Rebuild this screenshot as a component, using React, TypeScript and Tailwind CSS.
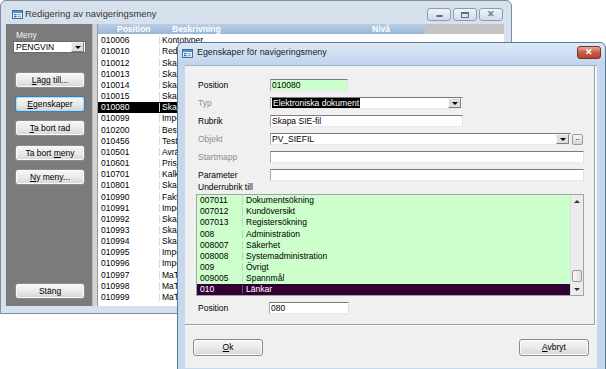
import React from "react";

const backRows = [
  ["010006", "Kontotyper"],
  ["010010", "Redovisningsår"],
  ["010012", "Skapa kundfil"],
  ["010013", "Skapa artikelfil"],
  ["010014", "Skapa prisfil"],
  ["010015", "Skapa orderfil"],
  ["010080", "Skapa SIE-fil"],
  ["010099", "Import av data"],
  ["010200", "Beställning"],
  ["010456", "Test"],
  ["010501", "Avräkning"],
  ["010601", "Prisjustering"],
  ["010701", "Kalkyl"],
  ["010801", "Skapa rapport"],
  ["010990", "Fakturering"],
  ["010991", "Import kunder"],
  ["010992", "Skapa export"],
  ["010993", "Skapa lista"],
  ["010994", "Skapa etikett"],
  ["010995", "Import artiklar"],
  ["010996", "Import priser"],
  ["010997", "MaTs export"],
  ["010998", "MaTs import"],
  ["010999", "MaTs rapport"],
];

const subRows = [
  ["007011", "Dokumentsökning"],
  ["007012", "Kundöversikt"],
  ["007013", "Registersökning"],
  ["008", "Administration"],
  ["008007", "Säkerhet"],
  ["008008", "Systemadministration"],
  ["009", "Övrigt"],
  ["009005", "Spannmål"],
  ["010", "Länkar"],
];

function WinIcon() {
  return (
    <svg width="11" height="9" viewBox="0 0 11 9" className="shrink-0">
      <rect x="0.5" y="0.5" width="10" height="8" fill="#eef4fb" stroke="#3b6ea8" />
      <rect x="1" y="1" width="9" height="2" fill="#5b8bc7" />
      <rect x="2" y="4" width="2.5" height="1.3" fill="#3b6ea8" />
      <rect x="5.5" y="4" width="3.5" height="1.3" fill="#8fb0d4" />
      <rect x="2" y="6" width="2.5" height="1.3" fill="#3b6ea8" />
      <rect x="5.5" y="6" width="3.5" height="1.3" fill="#8fb0d4" />
    </svg>
  );
}

function DropBtn() {
  return (
    <div className="flex h-[10px] w-[13px] shrink-0 items-end justify-center border border-t-[#f4f4f4] border-l-[#f4f4f4] border-r-[#7e7e7e] border-b-[#7e7e7e] bg-[#dedede] pb-[2px]">
      <div className="h-0 w-0 border-l-[3px] border-r-[3px] border-t-[3px] border-l-transparent border-r-transparent border-t-black" />
    </div>
  );
}

function Btn({
  children,
  focused = false,
  className = "",
}: {
  children: React.ReactNode;
  focused?: boolean;
  className?: string;
}) {
  return (
    <div
      className={`flex w-[70px] shrink-0 items-center justify-center rounded-[3px] border bg-gradient-to-b from-[#f7f7f7] via-[#ebebeb] to-[#d5d5d5] text-[8.5px] leading-none text-black ${
        focused
          ? "border-[#3c7fb1] shadow-[inset_0_0_0_1px_#a9dcf6]"
          : "border-[#8c8c8c] shadow-[inset_0_0_0_1px_#fafafa]"
      } ${className}`}
    >
      <span className="whitespace-pre">{children}</span>
    </div>
  );
}

function Field({
  className = "",
  children,
}: {
  className?: string;
  children?: React.ReactNode;
}) {
  return (
    <div
      className={`flex h-[12px] shrink-0 items-center border border-t-[#7c7c7c] border-l-[#a9a9a9] border-r-[#e2e2e2] border-b-[#e8e8e8] pl-[1px] text-[8.5px] leading-none ${className}`}
    >
      {children}
    </div>
  );
}

function Row({
  label,
  dim = false,
  children,
}: {
  label: string;
  dim?: boolean;
  children: React.ReactNode;
}) {
  return (
    <div className="flex h-[12px] items-center">
      <div className={`w-[72px] shrink-0 text-[8.5px] leading-none ${dim ? "text-[#8e8e8e]" : "text-black"}`}>
        {label}
      </div>
      {children}
    </div>
  );
}

export default function App() {
  return (
    <div className="relative h-[369px] w-[606px] overflow-hidden bg-white font-['Liberation_Sans',Arial,sans-serif]">
      {/* back window */}
      <div className="absolute left-0 top-0 flex h-[314px] w-[512px] flex-col rounded-t-[6px] border border-[#7d8da0] bg-[#d6e1ed]">
        <div className="flex h-[23px] shrink-0 items-start pl-[11px] pr-[8px]">
          <div className="mt-[9px] flex items-center">
            <WinIcon />
          </div>
          <span className="ml-[2px] mt-[8px] text-[9.4px] leading-none text-[#333333]">
            Redigering av navigeringsmeny
          </span>
          <div className="ml-auto mt-[7px] flex gap-[2px]">
            <div className="flex h-[13px] w-[24px] items-end justify-center rounded-[3px] border border-[#8b9bb0] bg-gradient-to-b from-[#eef3f9] to-[#d2dde9] pb-[3px]">
              <div className="h-[2px] w-[7px] rounded-[1px] border border-[#5d6d82]" />
            </div>
            <div className="flex h-[13px] w-[24px] items-center justify-center rounded-[3px] border border-[#8b9bb0] bg-gradient-to-b from-[#eef3f9] to-[#d2dde9]">
              <div className="h-[6px] w-[8px] border border-t-2 border-[#5d6d82]" />
            </div>
            <div className="flex h-[13px] w-[24px] items-center justify-center rounded-[3px] border border-[#8b9bb0] bg-gradient-to-b from-[#eef3f9] to-[#d2dde9] text-[9px] font-bold leading-none text-[#6a7a8e]">
              ✕
            </div>
          </div>
        </div>

        <div className="mb-[7px] ml-[5px] mr-[7px] flex min-h-0 flex-1">
          {/* left panel */}
          <div className="flex w-[86px] shrink-0 flex-col bg-[#7b7b7b] pb-[7px] pt-[6px]">
            <div className="ml-[10px] h-[10px] text-[8.5px] leading-[10px] text-[#f2f2f2]">Meny</div>
            <div className="ml-[7px] mt-[1px] flex h-[12px] w-[73px] items-center justify-between border border-[#6a6a6a] bg-white pl-[2px] pr-[1px] text-[8.5px] leading-none">
              <span>PENGVIN</span>
              <DropBtn />
            </div>
            <div className="ml-[9px] mt-[19px] flex flex-col gap-[8px]">
              <Btn className="h-[16px]">
                <span className="underline">L</span>ägg till...
              </Btn>
              <Btn focused className="h-[16px]">
                <span className="underline">E</span>genskaper
              </Btn>
              <Btn className="h-[16px]">
                <span className="underline">T</span>a bort rad
              </Btn>
              <Btn className="mt-[1px] h-[16px]">
                Ta bort <span className="underline">m</span>eny
              </Btn>
              <Btn className="h-[16px]">
                <span className="underline">N</span>y meny...
              </Btn>
            </div>
            <Btn className="ml-[9px] mt-auto h-[16px]">
              Stän<span className="underline">g</span>
            </Btn>
          </div>
          <div className="w-[6px] shrink-0 border-l border-r border-l-[#b9b9b9] border-r-[#9a9a9a] bg-[#d2d2d2]" />

          {/* list */}
          <div className="flex min-w-0 flex-1 flex-col overflow-hidden bg-white">
            <div className="flex h-[10px] shrink-0 text-[8.5px] font-bold leading-[10px] text-white">
              <div className="flex w-[74px] bg-gradient-to-b from-[#b8cee6] to-[#9ab7d8] pl-[19px]">Position</div>
              <div className="w-[200px] bg-gradient-to-b from-[#b8cee6] to-[#9ab7d8]">Beskrivning</div>
              <div className="w-[53px] bg-gradient-to-b from-[#b8cee6] to-[#9ab7d8]">Nivå</div>
              <div className="flex-1 bg-[#c3c3c3]" />
            </div>
            <div className="flex flex-col pt-[1px]">
              {backRows.map(([code, desc], i) => {
                const sel = code === "010080";
                return (
                  <div
                    key={code}
                    className={`flex h-[11.16px] items-center text-[8.5px] leading-none ${sel ? "bg-black text-white" : "text-black"}`}
                  >
                    <div className="w-[62px] shrink-0 border-r border-[#dcdcdc] pl-[3px]">{code}</div>
                    <div
                      className={`overflow-hidden whitespace-nowrap pl-[2px] ${i === 0 ? "w-[60px]" : "w-[17px]"}`}
                    >
                      {desc}
                    </div>
                  </div>
                );
              })}
            </div>
          </div>
        </div>
      </div>

      {/* dialog */}
      <div className="absolute left-[177px] top-[42px] flex h-[330px] w-[429px] flex-col rounded-t-[6px] border border-[#5a7897] bg-[#c5d8ee]">
        <div className="flex h-[22px] shrink-0 items-start rounded-t-[6px] bg-gradient-to-b from-[#dce9f7] to-[#bfd4ec] pl-[4px] pr-[4px]">
          <div className="mt-[6px] flex">
            <WinIcon />
          </div>
          <span className="ml-[4px] mt-[5px] text-[8.9px] leading-none text-[#1c1c1c]">
            Egenskaper för navigeringsmeny
          </span>
          <div className="ml-auto mt-[3px] flex h-[13px] w-[24px] items-center justify-center rounded-[3px] border border-[#73322a] bg-gradient-to-b from-[#e6a898] via-[#cc5a45] to-[#b8402c] text-[9px] font-bold leading-none text-white">
            ✕
          </div>
        </div>

        <div className="mb-[3px] ml-[7px] mr-[8px] flex flex-1 flex-col border-t border-[#9fb3c8] bg-[#f0f0f0]">
          <div className="mr-[2px] flex h-[259px] shrink-0 flex-col border-b border-r border-[#9d9d9d] pl-[13px] pt-[13px] shadow-[1px_1px_0_#ffffff]">
            <div className="flex flex-col gap-[6px]">
              <Row label="Position">
                <Field className="w-[78px] bg-[#ccffcc]">010080</Field>
              </Row>
              <Row label="Typ" dim>
                <Field className="w-[193px] justify-between bg-white pr-[1px]">
                  <span className="bg-black px-[1px] py-[1px] text-white">Elektroniska dokument</span>
                  <DropBtn />
                </Field>
              </Row>
              <Row label="Rubrik">
                <Field className="w-[193px] bg-white">Skapa SIE-fil</Field>
              </Row>
              <Row label="Objekt" dim>
                <Field className="w-[301px] justify-between bg-white pr-[1px]">
                  <span>PV_SIEFIL</span>
                  <DropBtn />
                </Field>
                <div className="ml-[1px] flex h-[11px] w-[11px] items-center justify-center rounded-[2px] border border-[#9a9a9a] bg-gradient-to-b from-[#f6f6f6] to-[#d8d8d8] text-[6px] font-bold leading-none">
                  ··
                </div>
              </Row>
              <Row label="Startmapp" dim>
                <Field className="w-[314px] bg-white" />
              </Row>
              <Row label="Parameter">
                <Field className="w-[314px] bg-white" />
              </Row>
            </div>
            <div className="mt-[1px] h-[10px] text-[8.5px] leading-[10px]">Underrubrik till</div>
            <div className="-ml-[2px] mt-[2px] flex h-[102px] w-[388px] border border-[#a3a3a3] bg-[#ccffcc]">
              <div className="flex flex-1 flex-col">
                {subRows.map(([code, desc]) => {
                  const sel = code === "010";
                  return (
                    <div
                      key={code}
                      className={`flex h-[11.1px] items-center text-[8.5px] leading-none ${sel ? "bg-[#330033] text-white" : "text-black"}`}
                    >
                      <div className={`w-[46px] shrink-0 border-r pl-[3px] ${sel ? "border-[#6b4d6b]" : "border-[#b5d9b5]"}`}>
                        {code}
                      </div>
                      <div className="pl-[3px]">{desc}</div>
                    </div>
                  );
                })}
              </div>
              <div className="flex w-[13px] shrink-0 flex-col border-l border-[#dcdcdc] bg-[#ececec]">
                <div className="flex h-[12px] items-center justify-center">
                  <div className="h-0 w-0 border-b-[3px] border-l-[3px] border-r-[3px] border-b-[#333] border-l-transparent border-r-transparent" />
                </div>
                <div className="flex flex-1 flex-col justify-end pb-[1px]">
                  <div className="mx-[1px] h-[12px] rounded-[2px] border border-[#9a9a9a] bg-gradient-to-r from-[#f7f7f7] to-[#e0e0e0]" />
                </div>
                <div className="flex h-[12px] items-center justify-center">
                  <div className="h-0 w-0 border-l-[3px] border-r-[3px] border-t-[3px] border-l-transparent border-r-transparent border-t-[#333]" />
                </div>
              </div>
            </div>
            <div className="mt-[6px]">
              <Row label="Position">
                <Field className="-ml-[1px] w-[80px] bg-white">080</Field>
              </Row>
            </div>
          </div>
          <div className="mt-[14px] flex justify-between px-[8px]">
            <Btn className="h-[17px]">
              <span className="underline">O</span>k
            </Btn>
            <Btn className="h-[17px]">
              <span className="underline">A</span>vbryt
            </Btn>
          </div>
        </div>
      </div>
    </div>
  );
}
